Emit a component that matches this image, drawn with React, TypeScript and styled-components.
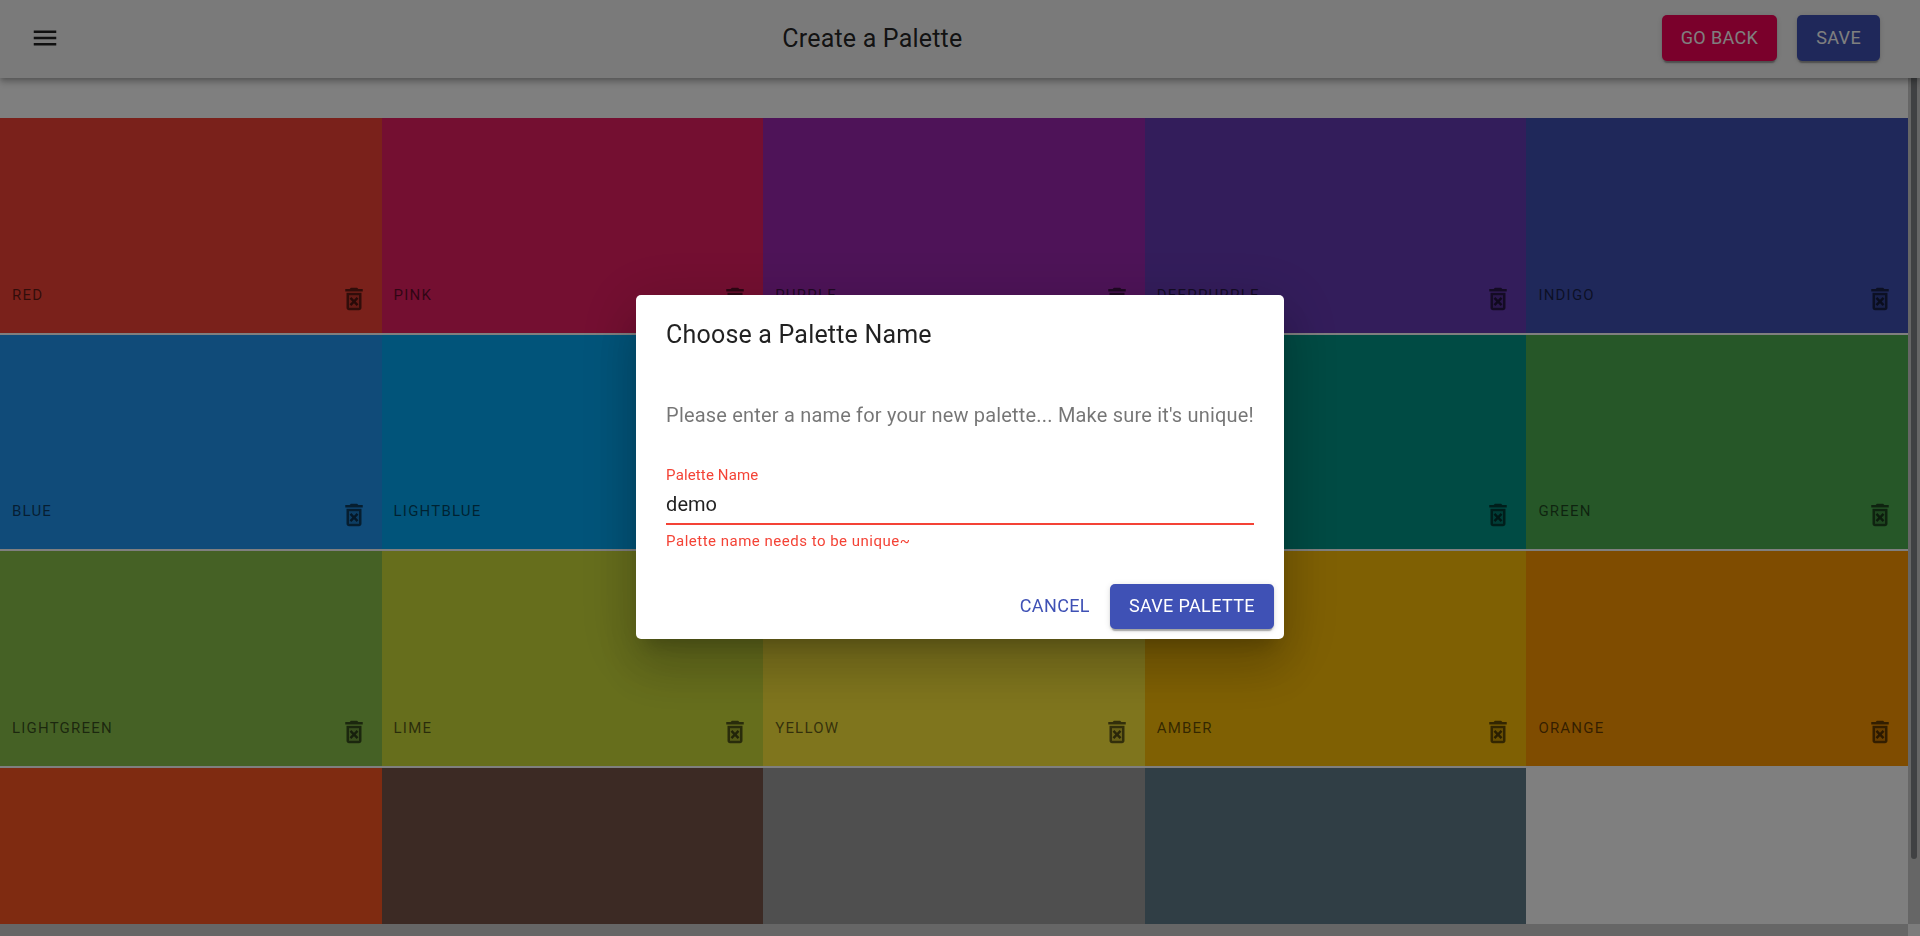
import React, { useState } from "react";
import styled, { createGlobalStyle } from "styled-components";
import { MdMenu } from "react-icons/md";

const GlobalStyle = createGlobalStyle`
  *, *::before, *::after { box-sizing: border-box; }
  body {
    margin: 0;
    background: #ffffff;
    color: rgba(0, 0, 0, 0.87);
    font-family: Roboto, "Liberation Sans", sans-serif;
    overflow: hidden;
  }
`;

const Page = styled.div`
  display: flex;
  flex-direction: column;
  height: 100vh;
`;

const AppBar = styled.header`
  position: relative;
  z-index: 1;
  display: flex;
  align-items: center;
  justify-content: space-between;
  flex: none;
  height: 78px;
  padding: 0 40px 2px 15px;
  background: #f5f5f5;
  box-shadow: 0 2px 5px -1px rgba(0, 0, 0, 0.2), 0 5px 6px 0 rgba(0, 0, 0, 0.14),
    0 1px 12px 0 rgba(0, 0, 0, 0.12);
`;

const IconButton = styled.button`
  display: flex;
  padding: 0;
  border: 0;
  background: none;
  color: inherit;
  cursor: pointer;
`;

const MenuButton = styled(IconButton)`
  margin-right: 18px;
  padding: 15px;
`;

const Title = styled.h1`
  margin: 0;
  padding-top: 2px;
  font-size: 25px;
  font-weight: 400;
  line-height: 40px;
  letter-spacing: 0.0075em;
`;

const Actions = styled.div`
  display: flex;
  gap: 20px;
  height: 46px;
  margin-left: 10px;
`;

const Button = styled.button<{ $tone?: "primary" | "secondary" | "text" }>`
  padding: 0 ${(p) => (p.$tone === "text" ? "10px" : "19px")} 2px;
  border: 0;
  border-radius: 5px;
  background: ${(p) =>
    p.$tone === "text" ? "transparent" : p.$tone === "secondary" ? "#f50057" : "#3f51b5"};
  color: ${(p) => (p.$tone === "text" ? "#3f51b5" : "#ffffff")};
  box-shadow: ${(p) =>
    p.$tone === "text"
      ? "none"
      : "0 4px 1px -2px rgba(0,0,0,.2), 0 2px 2px 0 rgba(0,0,0,.14), 0 1px 6px 0 rgba(0,0,0,.12)"};
  font-family: inherit;
  font-size: 18px;
  font-weight: 400;
  letter-spacing: 0.02em;
  text-transform: uppercase;
  cursor: pointer;
`;

const Workspace = styled.div`
  display: grid;
  grid-template-columns: minmax(0, 1fr) 12px;
  grid-template-rows: minmax(0, 1fr) 12px;
  flex: 1;
  min-height: 0;
`;

const Canvas = styled.main`
  padding-top: 40px;
  overflow-y: auto;
  scrollbar-width: none;
`;

const Swatches = styled.ul`
  display: grid;
  grid-template-columns: repeat(5, 1fr);
  grid-template-rows: repeat(4, 1fr);
  row-gap: 2px;
  height: calc(100vh - 72px);
  margin: 0;
  padding: 0;
  list-style: none;
`;

const Swatch = styled.li<{ $color: string }>`
  display: flex;
  align-items: flex-end;
  justify-content: space-between;
  padding: 0 13px 19px 12px;
  background: ${(p) => p.$color};
  color: rgba(0, 0, 0, 0.6);
  font-size: 15px;
  line-height: 38px;
  letter-spacing: 0.08em;
  text-transform: uppercase;
`;

const ScrollTrack = styled.div`
  padding: 0 3px 65px;
  background: #cccccc;
`;

const ScrollTrackHorizontal = styled.div`
  background: #cccccc;
`;

const ScrollThumb = styled.div`
  height: 100%;
  border-radius: 0 0 3px 3px;
  background: #808386;
`;

const ScrollCorner = styled.div`
  background: #f8f8f8;
`;

const Backdrop = styled.div`
  position: fixed;
  inset: 0;
  z-index: 2;
  display: flex;
  align-items: center;
  justify-content: center;
  padding-bottom: 2px;
  background: rgba(0, 0, 0, 0.5);
`;

const Dialog = styled.form`
  border-radius: 5px;
  background: #ffffff;
  box-shadow: 0 14px 19px -9px rgba(0, 0, 0, 0.2), 0 30px 48px 4px rgba(0, 0, 0, 0.14),
    0 11px 58px 10px rgba(0, 0, 0, 0.12);
`;

const DialogTitle = styled.h2`
  margin: 0;
  padding: 20px 30px;
  font-size: 25px;
  font-weight: 400;
  line-height: 40px;
  letter-spacing: 0.0075em;
`;

const DialogBody = styled.div`
  padding: 10px 30px 20px;
`;

const DialogText = styled.p`
  margin: 0 0 35px;
  padding-top: 15px;
  color: rgba(0, 0, 0, 0.54);
  font-size: 20px;
  line-height: 30px;
  letter-spacing: 0.00938em;
`;

const Field = styled.div`
  display: flex;
  flex-direction: column;
  color: #f44336;
  font-size: 15px;
`;

const Label = styled.label`
  line-height: 20px;
  letter-spacing: 0.00938em;
`;

const Input = styled.input`
  height: 40px;
  padding: 0;
  border: 0;
  border-bottom: 2px solid #f44336;
  outline: 0;
  background: none;
  color: rgba(0, 0, 0, 0.87);
  font-family: inherit;
  font-size: 20px;
  letter-spacing: inherit;
`;

const HelperText = styled.p`
  margin: 4px 0 0;
  line-height: 25px;
  letter-spacing: 0.03333em;
`;

const DialogActions = styled.div`
  display: flex;
  justify-content: flex-end;
  gap: 10px;
  height: 65px;
  padding: 10px;
`;

const TrashIcon = () => (
  <svg width="30" height="30" viewBox="0 0 24 24" fill="currentColor" aria-hidden="true">
    <path opacity="0.3" d="M8 9h8v10H8z" />
    <path d="M14.12 10.47L12 12.59l-2.13-2.12-1.41 1.41L10.59 14l-2.12 2.12 1.41 1.41L12 15.41l2.12 2.12 1.41-1.41L13.41 14l2.12-2.12zM15.5 4l-1-1h-5l-1 1H5v2h14V4zM6 19c0 1.1.9 2 2 2h8c1.1 0 2-.9 2-2V7H6v12zM8 9h8v10H8V9z" />
  </svg>
);

const colors = [
  { name: "red", color: "#f44336" },
  { name: "pink", color: "#e91e63" },
  { name: "purple", color: "#9c27b0" },
  { name: "deeppurple", color: "#673ab7" },
  { name: "indigo", color: "#3f51b5" },
  { name: "blue", color: "#2196f3" },
  { name: "lightblue", color: "#03a9f4" },
  { name: "cyan", color: "#00bcd4" },
  { name: "teal", color: "#009688" },
  { name: "green", color: "#4caf50" },
  { name: "lightgreen", color: "#8bc34a" },
  { name: "lime", color: "#cddc39" },
  { name: "yellow", color: "#ffeb3b" },
  { name: "amber", color: "#ffc107" },
  { name: "orange", color: "#ff9800" },
  { name: "deeporange", color: "#ff5722" },
  { name: "brown", color: "#795548" },
  { name: "grey", color: "#9e9e9e" },
  { name: "bluegrey", color: "#607d8b" },
];

export default function App() {
  const [name, setName] = useState("demo");
  return (
    <>
      <GlobalStyle />
      <Page>
        <AppBar>
          <MenuButton aria-label="Open drawer">
            <MdMenu size={30} />
          </MenuButton>
          <Title>Create a Palette</Title>
          <Actions>
            <Button $tone="secondary">Go Back</Button>
            <Button $tone="primary">Save</Button>
          </Actions>
        </AppBar>
        <Workspace>
          <Canvas>
            <Swatches>
              {colors.map((c) => (
                <Swatch key={c.name} $color={c.color}>
                  <span>{c.name}</span>
                  <IconButton aria-label={`Delete ${c.name}`}>
                    <TrashIcon />
                  </IconButton>
                </Swatch>
              ))}
            </Swatches>
          </Canvas>
          <ScrollTrack>
            <ScrollThumb />
          </ScrollTrack>
          <ScrollTrackHorizontal />
          <ScrollCorner />
        </Workspace>
      </Page>
      <Backdrop>
        <Dialog role="dialog" aria-labelledby="dialog-title" onSubmit={(e) => e.preventDefault()}>
          <DialogTitle id="dialog-title">Choose a Palette Name</DialogTitle>
          <DialogBody>
            <DialogText>
              Please enter a name for your new palette... Make sure it's unique!
            </DialogText>
            <Field>
              <Label htmlFor="palette-name">Palette Name</Label>
              <Input
                id="palette-name"
                value={name}
                aria-invalid="true"
                aria-describedby="palette-name-error"
                onChange={(e) => setName(e.target.value)}
              />
              <HelperText id="palette-name-error">Palette name needs to be unique~</HelperText>
            </Field>
          </DialogBody>
          <DialogActions>
            <Button type="button" $tone="text">
              Cancel
            </Button>
            <Button type="submit" $tone="primary">
              Save Palette
            </Button>
          </DialogActions>
        </Dialog>
      </Backdrop>
    </>
  );
}
